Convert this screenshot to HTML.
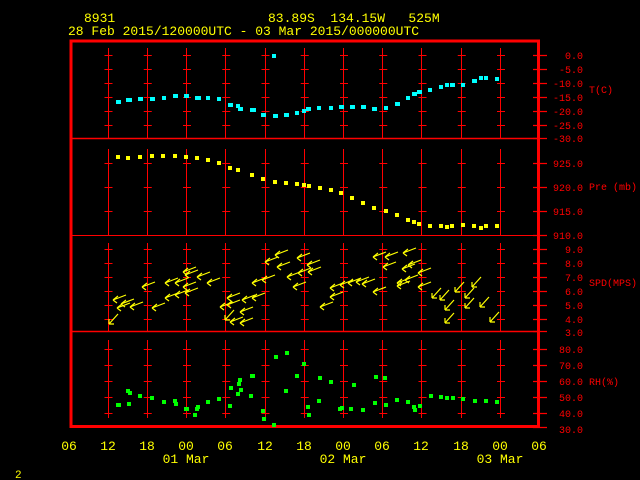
<!DOCTYPE html>
<html><head><meta charset="utf-8"><style>
html,body{margin:0;padding:0;background:#000;width:640px;height:480px;overflow:hidden}
svg{display:block}
text{font-family:"Liberation Mono","DejaVu Sans Mono",monospace}
.y{fill:#ffff00;font-size:13px}
.r{fill:#ff0000;font-size:10px}
</style></head><body>
<svg width="640" height="480" viewBox="0 0 640 480" xmlns="http://www.w3.org/2000/svg">
<defs>
<path id="a" d="M0,0 L13,-5 M0,0 L5,-4 M0,0 L4,3" stroke="#ffff00" stroke-width="1.2" fill="none"/>
<path id="b" d="M0,0 L9,-10 M0,0 L0,-5 M0,0 L5,0" stroke="#ffff00" stroke-width="1.2" fill="none"/>
</defs>
<!-- header -->
<text class="y" x="84" y="22">8931</text>
<text class="y" x="268" y="22" xml:space="preserve">83.89S  134.15W   525M</text>
<text class="y" x="68" y="35">28 Feb 2015/120000UTC - 03 Mar 2015/000000UTC</text>

<!-- vertical grid lines -->
<g stroke="#ff0000" stroke-width="1">
<path d="M108.5,48V138M147.5,48V138M186.5,48V138M225.5,48V138M265.5,48V138M304.5,48V138M343.5,48V138M382.5,48V138M421.5,48V138M461.5,48V138M500.5,48V138"/>
<path d="M108.5,149V235M147.5,149V235M186.5,149V235M225.5,149V235M265.5,149V235M304.5,149V235M343.5,149V235M382.5,149V235M421.5,149V235M461.5,149V235M500.5,149V235"/>
<path d="M108.5,243V331M147.5,243V331M186.5,243V331M225.5,243V331M265.5,243V331M304.5,243V331M343.5,243V331M382.5,243V331M421.5,243V331M461.5,243V331M500.5,243V331"/>
<path d="M108.5,340V418M147.5,340V418M186.5,340V418M225.5,340V418M265.5,340V418M304.5,340V418M343.5,340V418M382.5,340V418M421.5,340V418M461.5,340V418M500.5,340V418"/>
</g>
<!-- cross ticks -->
<g stroke="#ff0000" stroke-width="1" stroke-dasharray="8 31.25">
<path d="M104.5,55.5H505M104.5,69.5H505M104.5,83.5H505M104.5,97.5H505M104.5,111.5H505M104.5,125.5H505"/>
<path d="M104.5,163.5H505M104.5,187.5H505M104.5,211.5H505"/>
<path d="M104.5,249.5H505M104.5,263.5H505M104.5,277.5H505M104.5,291.5H505M104.5,305.5H505M104.5,319.5H505"/>
<path d="M104.5,349.5H505M104.5,365.5H505M104.5,381.5H505M104.5,397.5H505M104.5,413.5H505"/>
</g>
<!-- right ticks -->
<g stroke="#ff0000" stroke-width="1.2">
<path d="M533,55.5H547M533,69.5H547M533,83.5H547M533,97.5H547M533,111.5H547M533,125.5H547M533,138.5H547"/>
<path d="M533,163.5H547M533,187.5H547M533,211.5H547M533,235.5H547"/>
<path d="M533,249.5H547M533,263.5H547M533,277.5H547M533,291.5H547M533,305.5H547M533,319.5H547M533,331.5H547"/>
<path d="M533,349.5H547M533,365.5H547M533,381.5H547M533,397.5H547M533,413.5H547M533,427.5H547"/>
</g>
<!-- panel separators -->
<path d="M71,138.5H539M71,331.5H539" stroke="#ff0000" stroke-width="1.5"/>
<path d="M71,235.5H539" stroke="#ff0000" stroke-width="1"/>
<!-- frame -->
<rect x="71" y="41" width="467.5" height="385.5" fill="none" stroke="#ff0000" stroke-width="3"/>

<!-- right labels -->
<g class="r" text-anchor="end">
<text x="583" y="59">0.0</text><text x="583" y="73">-5.0</text><text x="583" y="87">-10.0</text>
<text x="583" y="101">-15.0</text><text x="583" y="115">-20.0</text><text x="583" y="129">-25.0</text>
<text x="583" y="142">-30.0</text>
<text x="583" y="167">925.0</text><text x="583" y="191">920.0</text><text x="583" y="215">915.0</text><text x="583" y="239">910.0</text>
<text x="583" y="253">9.0</text><text x="583" y="267">8.0</text><text x="583" y="281">7.0</text><text x="583" y="295">6.0</text>
<text x="583" y="309">5.0</text><text x="583" y="323">4.0</text><text x="583" y="336">3.0</text>
<text x="583" y="353">80.0</text><text x="583" y="369">70.0</text><text x="583" y="385">60.0</text>
<text x="583" y="401">50.0</text><text x="583" y="417">40.0</text><text x="583" y="433">30.0</text>
</g>
<g class="r">
<text x="589" y="93">T(C)</text>
<text x="589" y="190" xml:space="preserve">Pre (mb)</text>
<text x="589" y="286">SPD(MPS)</text>
<text x="589" y="385">RH(%)</text>
</g>

<!-- bottom labels -->
<g class="y" text-anchor="middle">
<text x="69" y="450">06</text><text x="108" y="450">12</text><text x="147" y="450">18</text><text x="186" y="450">00</text>
<text x="225" y="450">06</text><text x="265" y="450">12</text><text x="304" y="450">18</text><text x="343" y="450">00</text>
<text x="382" y="450">06</text><text x="421" y="450">12</text><text x="461" y="450">18</text><text x="500" y="450">00</text>
<text x="539" y="450">06</text>
<text x="186" y="463">01 Mar</text><text x="343" y="463">02 Mar</text><text x="500" y="463">03 Mar</text>
</g>
<text x="15" y="478" style="fill:#ffff00;font-size:11px">2</text>

<!-- T data -->
<g fill="#00ffff">
<rect x="116" y="100" width="5" height="4"/><rect x="126" y="98" width="6" height="4"/><rect x="138" y="97" width="5" height="4"/>
<rect x="150" y="97" width="5" height="4"/><rect x="162" y="96" width="4" height="4"/><rect x="173" y="94" width="5" height="4"/>
<rect x="184" y="94" width="5" height="4"/><rect x="195" y="96" width="6" height="4"/><rect x="206" y="96" width="4" height="4"/>
<rect x="217" y="97" width="4" height="4"/><rect x="228" y="103" width="5" height="4"/><rect x="236" y="104" width="4" height="4"/>
<rect x="238" y="107" width="5" height="4"/><rect x="250" y="108" width="6" height="4"/><rect x="261" y="113" width="5" height="4"/>
<rect x="273" y="114" width="5" height="4"/><rect x="284" y="113" width="5" height="4"/><rect x="295" y="111" width="4" height="4"/>
<rect x="302" y="109" width="4" height="4"/><rect x="306" y="107" width="5" height="4"/><rect x="317" y="106" width="4" height="4"/>
<rect x="272" y="54" width="4" height="4"/>
<rect x="329" y="106" width="4" height="4"/><rect x="339" y="105" width="5" height="4"/><rect x="350" y="105" width="5" height="4"/>
<rect x="361" y="105" width="5" height="4"/><rect x="372" y="107" width="5" height="4"/><rect x="384" y="106" width="4" height="4"/>
<rect x="395" y="102" width="5" height="4"/><rect x="406" y="96" width="4" height="4"/><rect x="412" y="92" width="5" height="4"/>
<rect x="417" y="90" width="5" height="4"/><rect x="428" y="88" width="4" height="4"/><rect x="439" y="85" width="4" height="4"/>
<rect x="445" y="83" width="4" height="4"/><rect x="450" y="83" width="5" height="4"/><rect x="461" y="83" width="4" height="4"/>
<rect x="472" y="79" width="5" height="4"/><rect x="479" y="76" width="4" height="4"/><rect x="484" y="76" width="4" height="4"/>
<rect x="495" y="77" width="4" height="4"/>
</g>
<!-- Pre data -->
<g fill="#ffff00">
<rect x="116" y="155" width="4" height="4"/><rect x="126" y="156" width="4" height="4"/><rect x="138" y="155" width="4" height="4"/>
<rect x="150" y="154" width="4" height="4"/><rect x="161" y="154" width="4" height="4"/><rect x="173" y="154" width="4" height="4"/>
<rect x="184" y="155" width="4" height="4"/><rect x="195" y="156" width="4" height="4"/><rect x="206" y="158" width="4" height="4"/>
<rect x="217" y="161" width="4" height="4"/><rect x="228" y="166" width="4" height="4"/><rect x="236" y="168" width="4" height="4"/>
<rect x="250" y="173" width="4" height="4"/><rect x="261" y="177" width="4" height="4"/><rect x="273" y="180" width="4" height="4"/>
<rect x="284" y="181" width="4" height="4"/><rect x="295" y="182" width="4" height="4"/><rect x="302" y="183" width="4" height="4"/>
<rect x="307" y="184" width="4" height="4"/><rect x="318" y="186" width="4" height="4"/>
<rect x="329" y="188" width="4" height="4"/><rect x="339" y="191" width="4" height="4"/><rect x="350" y="196" width="4" height="4"/>
<rect x="361" y="201" width="4" height="4"/><rect x="372" y="206" width="4" height="4"/><rect x="384" y="209" width="4" height="4"/>
<rect x="395" y="213" width="4" height="4"/><rect x="406" y="218" width="4" height="4"/><rect x="412" y="220" width="4" height="4"/>
<rect x="417" y="222" width="4" height="4"/><rect x="428" y="224" width="4" height="4"/><rect x="439" y="224" width="4" height="4"/>
<rect x="445" y="225" width="4" height="4"/><rect x="450" y="224" width="4" height="4"/><rect x="461" y="223" width="4" height="4"/>
<rect x="472" y="224" width="4" height="4"/><rect x="479" y="226" width="4" height="4"/><rect x="484" y="224" width="4" height="4"/>
<rect x="495" y="224" width="4" height="4"/>
</g>
<!-- SPD arrows -->
<g>
<use href="#b" x="109" y="324"/><use href="#a" x="113" y="300"/><use href="#a" x="117" y="308"/><use href="#a" x="121" y="304"/>
<use href="#a" x="130" y="307"/><use href="#a" x="142" y="287"/><use href="#a" x="152" y="308"/><use href="#a" x="165" y="283"/>
<use href="#a" x="175" y="283"/><use href="#a" x="165" y="298"/><use href="#a" x="175" y="295"/><use href="#a" x="183" y="272"/>
<use href="#a" x="185" y="275"/><use href="#a" x="183" y="287"/><use href="#a" x="185" y="293"/><use href="#a" x="197" y="277"/>
<use href="#a" x="207" y="283"/><use href="#a" x="220" y="307"/><use href="#a" x="227" y="298"/><use href="#a" x="227" y="305"/>
<use href="#b" x="225" y="320"/><use href="#a" x="230" y="322"/><use href="#a" x="240" y="312"/><use href="#a" x="240" y="323"/>
<use href="#a" x="242" y="300"/><use href="#a" x="252" y="298"/><use href="#a" x="252" y="283"/><use href="#a" x="262" y="280"/>
<use href="#a" x="265" y="262"/><use href="#a" x="275" y="255"/><use href="#a" x="277" y="267"/><use href="#a" x="287" y="277"/>
<use href="#a" x="293" y="287"/><use href="#a" x="297" y="258"/><use href="#a" x="298" y="273"/><use href="#a" x="307" y="265"/>
<use href="#a" x="308" y="272"/><use href="#a" x="320" y="307"/><use href="#a" x="330" y="288"/><use href="#a" x="330" y="297"/>
<use href="#a" x="340" y="285"/><use href="#a" x="348" y="283"/><use href="#a" x="356" y="282"/><use href="#a" x="362" y="284"/>
<use href="#a" x="373" y="257"/><use href="#a" x="385" y="257"/><use href="#a" x="403" y="253"/><use href="#a" x="383" y="267"/>
<use href="#a" x="402" y="269"/><use href="#a" x="408" y="265"/><use href="#a" x="418" y="273"/><use href="#a" x="373" y="292"/>
<use href="#a" x="397" y="283"/><use href="#a" x="397" y="286"/><use href="#a" x="405" y="280"/><use href="#a" x="418" y="287"/>
<use href="#b" x="432" y="298"/><use href="#b" x="440" y="300"/><use href="#b" x="445" y="310"/><use href="#b" x="445" y="323"/>
<use href="#b" x="455" y="292"/><use href="#b" x="465" y="298"/><use href="#b" x="465" y="308"/><use href="#b" x="472" y="287"/>
<use href="#b" x="480" y="307"/><use href="#b" x="490" y="322"/>
</g>
<!-- RH data -->
<g fill="#00ff00">
<rect x="116" y="403" width="5" height="4"/><rect x="126" y="389" width="4" height="4"/><rect x="128" y="391" width="4" height="4"/>
<rect x="127" y="402" width="4" height="4"/><rect x="138" y="394" width="4" height="4"/><rect x="150" y="396" width="4" height="4"/>
<rect x="162" y="400" width="4" height="4"/><rect x="173" y="399" width="4" height="4"/><rect x="174" y="402" width="4" height="4"/>
<rect x="184" y="407" width="5" height="4"/><rect x="193" y="413" width="4" height="4"/><rect x="195" y="407" width="4" height="4"/>
<rect x="196" y="405" width="4" height="4"/><rect x="206" y="400" width="4" height="4"/><rect x="217" y="397" width="4" height="4"/>
<rect x="228" y="404" width="4" height="4"/><rect x="229" y="386" width="4" height="4"/><rect x="237" y="382" width="4" height="4"/>
<rect x="238" y="378" width="4" height="4"/><rect x="236" y="392" width="4" height="4"/><rect x="239" y="388" width="4" height="4"/>
<rect x="250" y="374" width="5" height="4"/><rect x="249" y="394" width="4" height="4"/><rect x="261" y="409" width="4" height="4"/>
<rect x="262" y="417" width="4" height="4"/><rect x="272" y="423" width="4" height="4"/><rect x="274" y="355" width="4" height="4"/>
<rect x="285" y="351" width="4" height="4"/><rect x="284" y="389" width="4" height="4"/><rect x="295" y="374" width="4" height="4"/>
<rect x="302" y="362" width="4" height="4"/><rect x="306" y="405" width="4" height="4"/><rect x="307" y="413" width="4" height="4"/>
<rect x="317" y="399" width="4" height="4"/><rect x="318" y="376" width="4" height="4"/><rect x="329" y="380" width="4" height="4"/>
<rect x="338" y="407" width="4" height="4"/><rect x="340" y="406" width="4" height="4"/><rect x="349" y="407" width="4" height="4"/>
<rect x="352" y="383" width="4" height="4"/><rect x="361" y="408" width="4" height="4"/><rect x="373" y="401" width="4" height="4"/>
<rect x="374" y="375" width="4" height="4"/><rect x="383" y="376" width="4" height="4"/><rect x="384" y="403" width="4" height="4"/>
<rect x="395" y="398" width="4" height="4"/><rect x="406" y="400" width="4" height="4"/><rect x="413" y="408" width="4" height="4"/>
<rect x="412" y="405" width="4" height="4"/><rect x="418" y="404" width="4" height="4"/><rect x="429" y="394" width="4" height="4"/>
<rect x="439" y="395" width="4" height="4"/><rect x="445" y="396" width="4" height="4"/><rect x="451" y="396" width="4" height="4"/>
<rect x="461" y="397" width="4" height="4"/><rect x="473" y="399" width="4" height="4"/><rect x="484" y="399" width="4" height="4"/>
<rect x="495" y="400" width="4" height="4"/>
</g>
</svg>
</body></html>
